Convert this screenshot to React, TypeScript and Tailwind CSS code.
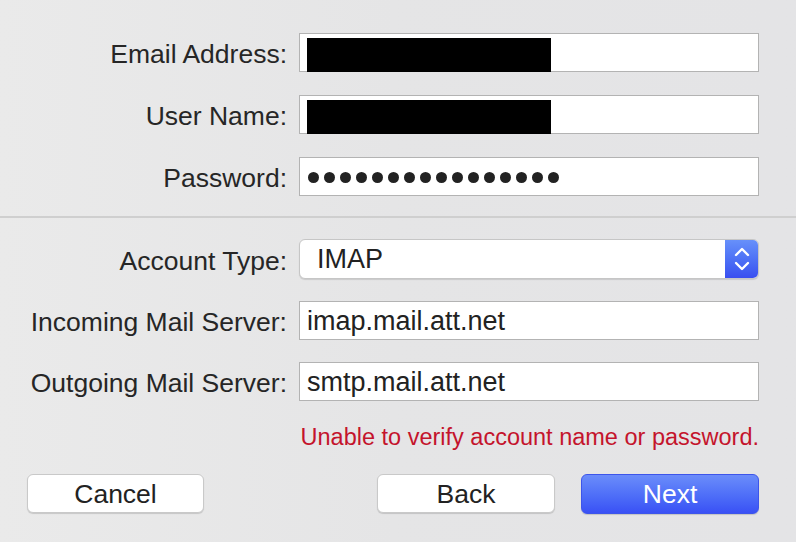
import React from 'react';

const font = { fontFamily: '"Liberation Sans", Arial, sans-serif' };

function Field({ children }: { children?: React.ReactNode }) {
  return (
    <div className="h-[39px] w-[460px] bg-white border border-[#b3b3b3] flex items-center pl-[7px] pt-px text-[27px] text-[#222] leading-none">
      {children}
    </div>
  );
}

function Label({ text }: { text: string }) {
  return <div className="text-right text-[26.5px] text-[#262626] leading-none pr-3 pt-[4px]">{text}</div>;
}

function Redacted() {
  return <div className="h-[34px] w-[244px] bg-black mt-[4px]" />;
}

function Dots() {
  return (
    <div className="flex gap-[5px] ml-px">
      {Array.from({ length: 16 }).map((_, i) => (
        <span key={i} className="block w-[11px] h-[11px] rounded-full bg-[#222]" />
      ))}
    </div>
  );
}

export default function App() {
  return (
    <div
      className="w-[796px] h-[542px] bg-gradient-to-r from-[#eaeaea] via-[#e5e5e6] to-[#e4e4e6] flex flex-col overflow-hidden"
      style={font}
    >
      <div className="grid grid-cols-[299px_460px] items-center gap-y-[23px] pt-[33px]">
        <Label text="Email Address:" />
        <Field>
          <Redacted />
        </Field>
        <Label text="User Name:" />
        <Field>
          <Redacted />
        </Field>
        <Label text="Password:" />
        <Field>
          <Dots />
        </Field>
      </div>

      <div className="mt-[20px] h-[2px] bg-[#cfcfcf]" />

      <div className="grid grid-cols-[299px_460px] items-center gap-y-[22px] pt-[21px]">
        <Label text="Account Type:" />
        <div className="h-[40px] w-[460px] bg-white border border-[#c6c6c6] rounded-[6px] shadow-[0_1px_1px_rgba(0,0,0,0.12)] flex items-stretch overflow-hidden">
          <div className="flex-1 flex items-center pl-[17px] pt-px text-[27px] text-[#222] leading-none">IMAP</div>
          <div className="w-[33px] bg-gradient-to-b from-[#6790fa] to-[#3a4ef0] flex items-center justify-center">
            <svg width="18" height="30" viewBox="0 0 18 30" fill="none" stroke="white" strokeWidth="2.4" strokeLinecap="round" strokeLinejoin="round">
              <path d="M3 11 L9 5 L15 11" />
              <path d="M3 19 L9 25 L15 19" />
            </svg>
          </div>
        </div>
        <Label text="Incoming Mail Server:" />
        <Field>imap.mail.att.net</Field>
        <Label text="Outgoing Mail Server:" />
        <Field>smtp.mail.att.net</Field>
      </div>

      <div className="mt-[25px] w-[759px] text-right text-[23.5px] leading-none text-[#c4142c]">
        Unable to verify account name or password.
      </div>

      <div className="mt-[24px] flex items-center pl-[27px]">
        <button className="w-[177px] h-[39px] pt-[2px] bg-white border border-[#c9c9c9] rounded-[6px] shadow-[0_1px_1px_rgba(0,0,0,0.15)] text-[26.5px] text-[#222] leading-none">
          Cancel
        </button>
        <button className="ml-[173px] w-[178px] h-[39px] pt-[2px] bg-white border border-[#c9c9c9] rounded-[6px] shadow-[0_1px_1px_rgba(0,0,0,0.15)] text-[26.5px] text-[#222] leading-none">
          Back
        </button>
        <button className="ml-[26px] w-[178px] h-[40px] pt-[2px] bg-gradient-to-b from-[#6b8cfa] to-[#3a50f5] border border-[#3d55ea] rounded-[6px] shadow-[0_1px_1px_rgba(0,0,0,0.15)] text-[26.5px] text-white leading-none">
          Next
        </button>
      </div>
    </div>
  );
}
